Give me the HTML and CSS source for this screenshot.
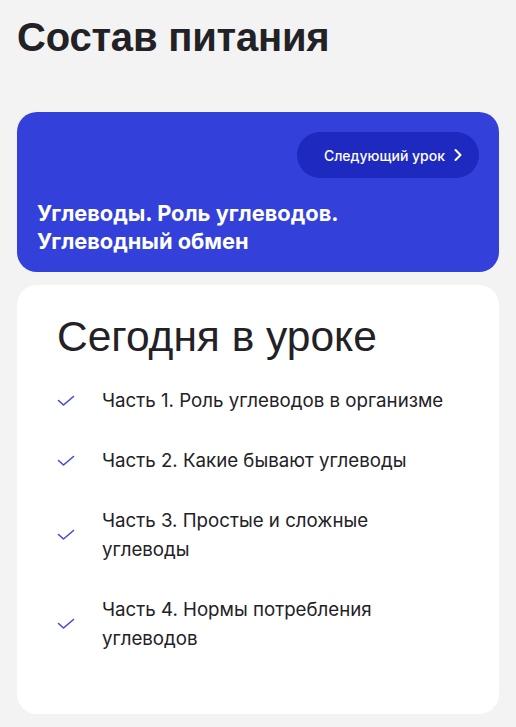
FILE: index.html
```html
<!DOCTYPE html>
<html lang="ru">
<head>
<meta charset="utf-8">
<link rel="stylesheet" href="styles.css">
</head>
<body>
<div class="page">
  <h1 class="page-title">Состав питания</h1>
  <section class="lesson-card">
    <div class="lesson-top">
      <button class="next-btn">Следующий урок
        <svg class="chev" width="10" height="14" viewBox="0 0 10 14"><path d="M2.5 2 L7.5 7 L2.5 12" fill="none" stroke="#fff" stroke-width="2" stroke-linecap="round" stroke-linejoin="round"/></svg>
      </button>
    </div>
    <h2 class="lesson-title">Углеводы. Роль углеводов.<br>Углеводный обмен</h2>
  </section>
  <section class="today-card">
    <h3 class="today-title">Сегодня в уроке</h3>
    <ul class="parts">
      <li class="part"><svg class="check" width="18" height="12" viewBox="0 0 18 12"><path d="M1.5 5.5 L6.5 10 L16.5 1.5" fill="none" stroke="#4349e0" stroke-width="1.6" stroke-linecap="round" stroke-linejoin="round"/></svg><span class="part-text">Часть 1. Роль углеводов в организме</span></li>
      <li class="part"><svg class="check" width="18" height="12" viewBox="0 0 18 12"><path d="M1.5 5.5 L6.5 10 L16.5 1.5" fill="none" stroke="#4349e0" stroke-width="1.6" stroke-linecap="round" stroke-linejoin="round"/></svg><span class="part-text">Часть 2. Какие бывают углеводы</span></li>
      <li class="part"><svg class="check" width="18" height="12" viewBox="0 0 18 12"><path d="M1.5 5.5 L6.5 10 L16.5 1.5" fill="none" stroke="#4349e0" stroke-width="1.6" stroke-linecap="round" stroke-linejoin="round"/></svg><span class="part-text">Часть 3. Простые и сложные<br>углеводы</span></li>
      <li class="part"><svg class="check" width="18" height="12" viewBox="0 0 18 12"><path d="M1.5 5.5 L6.5 10 L16.5 1.5" fill="none" stroke="#4349e0" stroke-width="1.6" stroke-linecap="round" stroke-linejoin="round"/></svg><span class="part-text">Часть 4. Нормы потребления<br>углеводов</span></li>
    </ul>
  </section>
</div>
</body>
</html>
```
FILE: styles.css
```css
* { box-sizing: border-box; }
html, body { margin: 0; padding: 0; background: #f3f3f3; }
body { font-family: "Liberation Sans", Arial, sans-serif; color: #222126; }
.page { padding: 14px 17px 0; display: flex; flex-direction: column; }
.page-title { margin: 0 0 52px; font-size: 40px; font-weight: 700; line-height: 46px; letter-spacing: -0.2px; }
.lesson-card { background: #3341da; border-radius: 20px; height: 160px; padding: 20px 20px 0; display: flex; flex-direction: column; }
.lesson-top { display: flex; justify-content: flex-end; }
.next-btn { height: 46px; width: 182px; border: 0; border-radius: 23px; background: #1e29c0; color: #fff; font-family: Inter, "Liberation Sans", sans-serif; font-size: 14px; font-weight: 500; display: flex; align-items: center; justify-content: flex-end; gap: 8px; padding: 0 16px 0 0; }
.chev { display: block; }
.lesson-title { margin: 21px 0 0; color: #fff; font-family: Inter, "Liberation Sans", sans-serif; font-size: 21.8px; font-weight: 700; line-height: 28px; }
.today-card { margin-top: 13px; background: #fff; border-radius: 20px; height: 429px; padding: 28px 40px 0; }
.today-title { margin: 0 0 25px; font-size: 42.5px; font-weight: 400; line-height: 48px; }
.parts { list-style: none; margin: 0; padding: 0; display: flex; flex-direction: column; gap: 31px; }
.part { display: flex; align-items: center; gap: 27px; }
.check { display: block; flex: none; }
.part-text { font-family: Inter, "Liberation Sans", sans-serif; font-size: 18.7px; line-height: 29px; color: #222126; }
```
